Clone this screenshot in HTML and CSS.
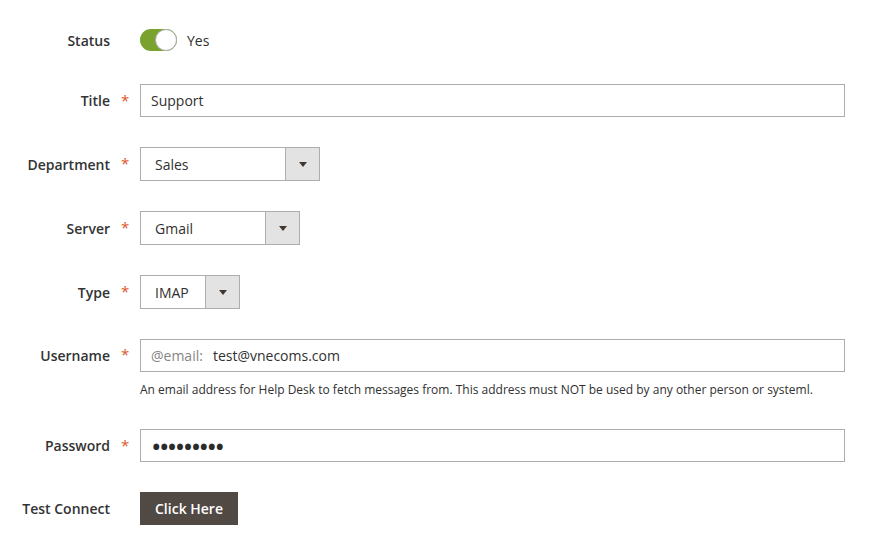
FILE: index.html
```html
<!DOCTYPE html>
<html lang="en">
<head>
<meta charset="utf-8">
<title>Mail Server</title>
<link rel="stylesheet" href="styles.css">
</head>
<body>
<form class="form">
  <div class="row row-status">
    <div class="label">Status</div>
    <div class="req"></div>
    <div class="control">
      <span class="toggle"><span class="knob"></span></span>
      <span class="toggle-text">Yes</span>
    </div>
  </div>

  <div class="row">
    <div class="label">Title</div>
    <div class="req">*</div>
    <div class="control">
      <input class="input input-wide" type="text" value="Support">
    </div>
  </div>

  <div class="row row-select">
    <div class="label">Department</div>
    <div class="req">*</div>
    <div class="control">
      <div class="select select-dept">
        <span class="select-value">Sales</span>
        <span class="select-arrow"><span class="tri"></span></span>
      </div>
    </div>
  </div>

  <div class="row row-select">
    <div class="label">Server</div>
    <div class="req">*</div>
    <div class="control">
      <div class="select select-server">
        <span class="select-value">Gmail</span>
        <span class="select-arrow"><span class="tri"></span></span>
      </div>
    </div>
  </div>

  <div class="row row-select">
    <div class="label">Type</div>
    <div class="req">*</div>
    <div class="control">
      <div class="select select-type">
        <span class="select-value">IMAP</span>
        <span class="select-arrow"><span class="tri"></span></span>
      </div>
    </div>
  </div>

  <div class="row row-with-note">
    <div class="label">Username</div>
    <div class="req">*</div>
    <div class="control control-col">
      <div class="addon input-wide">
        <span class="addon-prefix">@email:</span>
        <input class="addon-input" type="text" value="test@vnecoms.com">
      </div>
      <div class="note">An email address for Help Desk to fetch messages from. This address must NOT be used by any other person or systeml.</div>
    </div>
  </div>

  <div class="row">
    <div class="label">Password</div>
    <div class="req">*</div>
    <div class="control">
      <input class="input input-wide input-pass" type="password" value="123456789">
    </div>
  </div>

  <div class="row">
    <div class="label">Test Connect</div>
    <div class="req"></div>
    <div class="control">
      <button class="btn" type="button">Click Here</button>
    </div>
  </div>
</form>
</body>
</html>
```

FILE: styles.css
```css
html, body {
  margin: 0;
  padding: 0;
  background: #ffffff;
}

body {
  font-family: "Open Sans", "Liberation Sans", sans-serif;
  font-size: 14px;
  color: #303030;
}

.form {
  padding-top: 29px;
}

.row {
  display: flex;
  align-items: center;
  height: 33px;
  margin-bottom: 30px;
}

.row-status {
  height: 22px;
  margin-bottom: 33px;
}

.row-select {
  height: 34px;
}

.row-with-note {
  height: auto;
  align-items: flex-start;
}

.row-with-note .label,
.row-with-note .req {
  height: 33px;
  line-height: 33px;
}

.label {
  width: 110px;
  flex: 0 0 110px;
  text-align: right;
  font-weight: 600;
  color: #333333;
  font-size: 14px;
}

.req {
  width: 30px;
  flex: 0 0 30px;
  box-sizing: border-box;
  padding-left: 11px;
  color: #e0562a;
  font-size: 15px;
  font-weight: 400;
  position: relative;
  top: -1px;
}

.control {
  display: flex;
  align-items: center;
}

.control-col {
  flex-direction: column;
  align-items: flex-start;
}

.toggle {
  display: inline-block;
  position: relative;
  width: 37px;
  height: 22px;
  border-radius: 11px;
  background: #79a22e;
  box-sizing: border-box;
}

.knob {
  position: absolute;
  top: 0;
  right: 0;
  width: 22px;
  height: 22px;
  border-radius: 50%;
  background: #ffffff;
  border: 1px solid #adadad;
  box-sizing: border-box;
}

.toggle-text {
  margin-left: 10px;
  color: #303030;
}

.input {
  box-sizing: border-box;
  height: 33px;
  border: 1px solid #adadad;
  background: #fff;
  padding: 0 10px;
  font-family: "Open Sans", "Liberation Sans", sans-serif;
  font-size: 14px;
  color: #303030;
  outline: none;
}

.input-wide {
  width: 705px;
}

.input-pass {
  font-size: 28px;
  letter-spacing: -2.6px;
  color: #2b2b2b;
  padding: 0 0 0 10px;
}

.select {
  box-sizing: border-box;
  height: 34px;
  border: 1px solid #adadad;
  display: flex;
  align-items: stretch;
  background: #fff;
}

.select-dept { width: 180px; }
.select-server { width: 160px; }
.select-type { width: 100px; }

.select-value {
  flex: 1;
  display: flex;
  align-items: center;
  padding-left: 14px;
  color: #303030;
}

.select-arrow {
  width: 33px;
  flex: 0 0 33px;
  background: #e3e3e3;
  border-left: 1px solid #adadad;
  display: flex;
  align-items: center;
  justify-content: center;
}

.tri {
  width: 0;
  height: 0;
  border-left: 4px solid transparent;
  border-right: 4px solid transparent;
  border-top: 5px solid #41362f;
}

.addon {
  box-sizing: border-box;
  height: 33px;
  border: 1px solid #adadad;
  display: flex;
  align-items: center;
  background: #fff;
}

.addon-prefix {
  padding-left: 10px;
  color: #858585;
  white-space: nowrap;
}

.addon-input {
  flex: 1;
  border: 0;
  outline: none;
  height: 31px;
  padding: 0 0 0 10px;
  font-family: "Open Sans", "Liberation Sans", sans-serif;
  font-size: 14px;
  color: #303030;
  background: transparent;
}

.note {
  margin-top: 9px;
  font-size: 12px;
  line-height: 18px;
  color: #303030;
}

.btn {
  box-sizing: border-box;
  width: 98px;
  height: 33px;
  border: 0;
  background: #514943;
  color: #ffffff;
  font-family: "Open Sans", "Liberation Sans", sans-serif;
  font-weight: 600;
  font-size: 14px;
  padding: 0;
  cursor: pointer;
}
```
